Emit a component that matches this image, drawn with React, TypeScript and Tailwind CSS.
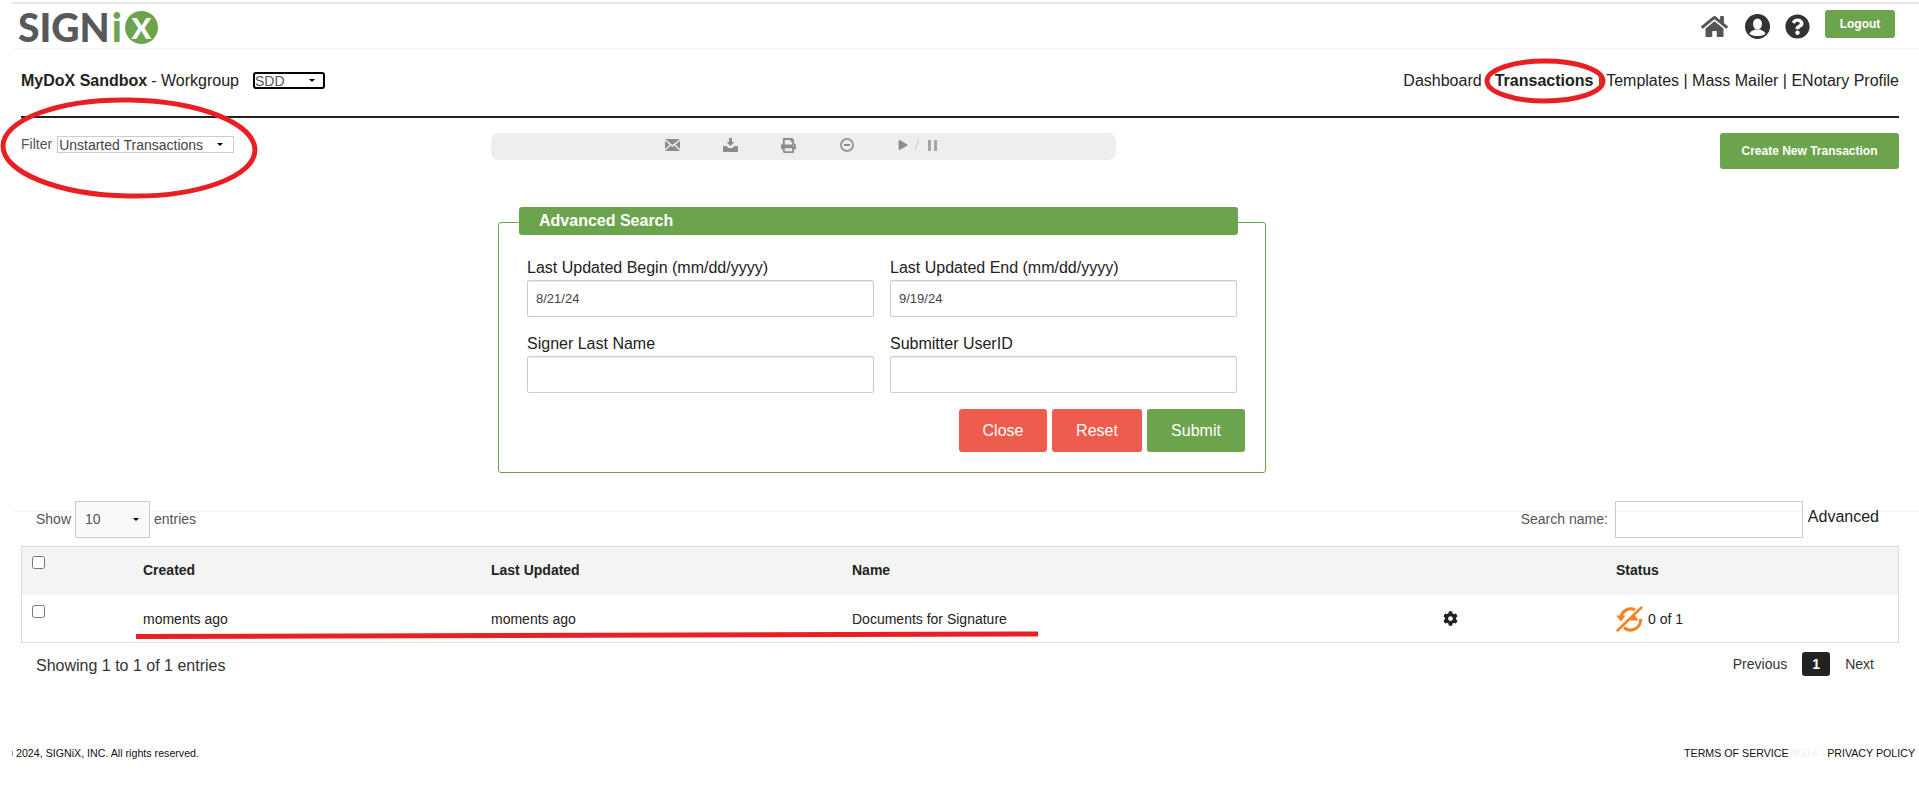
import { FaCog, FaHome, FaPlay, FaPrint, FaQuestionCircle } from "react-icons/fa";

function Caret() {
  return <span className="ml-auto h-0 w-0 border-x-[3px] border-t-[3px] border-x-transparent border-t-black" />;
}

function Field({ label, value }: { label: string; value?: string }) {
  return (
    <div>
      <label className="block h-[21px] text-[16px] leading-[17px] text-[#222]">{label}</label>
      <input
        defaultValue={value}
        className="block h-[37px] w-full rounded-[2px] border border-[#ccc] px-[8px] pb-[1px] text-[13px] text-[#444] shadow-[inset_0_1px_1px_rgba(0,0,0,0.075)]"
      />
    </div>
  );
}

function MailIcon() {
  return (
    <svg width="15" height="12" viewBox="0 0 15 12">
      <path d="M0 0h15L7.5 6zM0 1.8l4.6 3.9L0 10zM15 1.8l-4.6 3.9L15 10zM5.6 6.6l1.9 1.5 1.9-1.5L15 12H0z" fill="#8c8c8c" />
    </svg>
  );
}

function SaveIcon() {
  return (
    <svg width="15" height="14" viewBox="0 0 15 14">
      <path d="M6 0h3v4h2.5l-4 4-4-4H6zM0 8h3.5l2 2h4l2-2H15v6H0z" fill="#8c8c8c" />
    </svg>
  );
}

function StatusIcon() {
  return (
    <svg width="27" height="26" viewBox="0 0 27 26" fill="none" stroke="#f58220">
      <path d="M5 11.500A10 10 0 0 1 19 3.800M24.500 13A10 10 0 0 1 8 21.500" strokeWidth="3" />
      <path d="M1.500 24.500 25.500 1.500" strokeWidth="2.500" strokeLinecap="round" />
      <path d="M0 9.500h9.500L5 15.500zM14 14.500h8.500L18 8z" fill="#f58220" stroke="none" />
    </svg>
  );
}

function UserIcon() {
  return (
    <svg width="25" height="25" viewBox="0 0 25 25">
      <circle cx="12.5" cy="12.5" r="12.5" fill="#333" />
      <ellipse cx="12.5" cy="10" rx="4.5" ry="5.5" fill="#fff" />
      <path d="M4.5 20c.5-3 4-3.5 5.5-4.5h5c1.500 1 5 1.500 5.500 4.500-2 1.500-4.500 2-8 2s-6-.5-8-2z" fill="#fff" />
    </svg>
  );
}

export default function App() {
  return (
    <div className="relative h-[799px] overflow-hidden bg-white pt-[2px] font-['Liberation_Sans',sans-serif] text-[#333]">
      {/* Top bar */}
      <header className="ml-[12px] flex h-[47px] items-start border-t-2 border-b border-t-[#e5e5e5] border-b-[#f6f6f6] pl-[6px] pr-[24px]">
        <div className="mt-[7px] flex h-[33px] items-center font-['Lato',sans-serif] text-[39px] font-black leading-none text-[#58595b]">
          SIGN<span className="ml-[2px] text-[#6ca44d]">i</span>
          <span className="ml-[3px] flex h-[33px] w-[33px] items-center justify-center rounded-full bg-[#6ca44d] text-[29px] text-white">X</span>
        </div>
        <div className="ml-auto flex items-start">
          <FaHome className="mt-[9px] text-[#555]" size={27} />
          <span className="ml-[17px] mt-[10px]"><UserIcon /></span>
          <FaQuestionCircle className="ml-[15px] mt-[10px] text-[#333]" size={25} />
          <button className="ml-[15px] mt-[6px] h-[28px] w-[70px] rounded-[3px] bg-[#6ca44d] text-[12px] font-bold text-white">Logout</button>
        </div>
      </header>

      {/* Workgroup and nav */}
      <div className="flex h-[67px] items-start pl-[21px] pr-[20px] pt-[23px] text-[16px] leading-[18px] text-[#222]">
        <b>MyDoX Sandbox</b>
        <span className="ml-[4px]">- Workgroup</span>
        <div className="ml-[14px] flex h-[17px] w-[72px] items-center rounded-[3px] border-2 border-black pr-[8px] text-[14px] leading-none text-[#555]">
          SDD<Caret />
        </div>
        <nav className="ml-auto">
          Dashboard | <b>Transactions</b> | Templates | Mass Mailer | ENotary Profile
        </nav>
      </div>
      <div className="ml-[21px] mr-[20px] h-[2px] bg-[#222]" />

      {/* Filter, toolbar, create */}
      <div className="flex items-start pl-[21px] pr-[20px] pt-[15px]">
        <div className="flex w-[470px] items-center pt-[3px] text-[14px] leading-[17px] text-[#555]">
          Filter
          <div className="ml-[5px] flex h-[17px] w-[177px] items-center border border-[#ccc] pl-[1px] pr-[10px] text-[14px] leading-none text-[#444]">
            Unstarted Transactions<Caret />
          </div>
        </div>
        <div className="flex h-[27px] w-[625px] items-center rounded-[8px] bg-[#eee] pb-[3px] pl-[174px] text-[#8c8c8c]">
          <MailIcon />
          <span className="ml-[43px]"><SaveIcon /></span>
          <FaPrint className="ml-[43px]" size={15} />
          <span className="ml-[44px] flex h-[14px] w-[14px] items-center justify-center rounded-full border-2 border-[#999]">
            <span className="h-[2px] w-[6px] bg-[#8c8c8c]" />
          </span>
          <FaPlay className="ml-[44px]" size={10} />
          <span className="ml-[7px] text-[14px] leading-none text-[#c9d99a]">/</span>
          <span className="ml-[9px] flex gap-[3px]">
            <span className="h-[11px] w-[3px] bg-[#a5a5a5]" />
            <span className="h-[11px] w-[3px] bg-[#a5a5a5]" />
          </span>
        </div>
        <button className="ml-auto h-[36px] w-[179px] rounded-[3px] bg-[#6ca44d] text-[12px] font-bold text-white">Create New Transaction</button>
      </div>

      {/* Advanced search */}
      <div className="ml-[498px] mt-[53px] h-[251px] w-[768px] rounded-[3px] border border-[#6ca44d] pl-[28px] pr-[20px]">
        <div className="-ml-[8px] -mt-[16px] flex h-[28px] w-[719px] items-center rounded-[3px] bg-[#6ca44d] pl-[20px] text-[16px] font-bold text-white">
          Advanced Search
        </div>
        <div className="mt-[24px] grid w-[710px] grid-cols-2 gap-x-[16px] gap-y-[18px]">
          <Field label="Last Updated Begin (mm/dd/yyyy)" value="8/21/24" />
          <Field label="Last Updated End (mm/dd/yyyy)" value="9/19/24" />
          <Field label="Signer Last Name" />
          <Field label="Submitter UserID" />
        </div>
        <div className="mt-[16px] flex justify-end gap-[5px] pb-[1px] text-[16px] text-white">
          <button className="h-[43px] w-[88px] rounded-[3px] bg-[#ed5c4d]">Close</button>
          <button className="h-[43px] w-[90px] rounded-[3px] bg-[#ed5c4d]">Reset</button>
          <button className="h-[43px] w-[98px] rounded-[3px] bg-[#6ca44d]">Submit</button>
        </div>
      </div>

      {/* Table controls */}
      <div className="ml-[12px] h-[39px] border-b border-[#f6f6f6]" />
      <div className="-mt-[11px] flex h-[37px] items-center pl-[36px] pr-[40px] text-[14px] text-[#555]">
        Show
        <div className="ml-[4px] flex h-[37px] w-[75px] items-center border border-[#ccc] bg-[#fafafa] pl-[9px] pr-[10px]">
          10<Caret />
        </div>
        <span className="ml-[4px]">entries</span>
        <span className="ml-auto">Search name:</span>
        <input className="ml-[7px] h-[37px] w-[188px] border border-[#ccc]" />
        <span className="mb-[6px] ml-[5px] text-[16px] text-[#222]">Advanced</span>
      </div>

      {/* Table */}
      <div className="ml-[21px] mr-[20px] mt-[8px] border border-[#ddd] text-[14px] text-[#222]">
        <div className="grid h-[48px] grid-cols-[121px_348px_361px_591px_173px_1fr] bg-[#f4f4f4] font-bold">
          <div className="pl-[10px] pt-[9px]"><input type="checkbox" className="m-0 block h-[13px] w-[13px]" /></div>
          <div className="pt-[13px]">Created</div>
          <div className="pt-[13px]">Last Updated</div>
          <div className="pt-[13px]">Name</div>
          <div />
          <div className="pt-[13px]">Status</div>
        </div>
        <div className="grid h-[47px] grid-cols-[121px_348px_361px_591px_173px_1fr]">
          <div className="pl-[10px] pt-[10px]"><input type="checkbox" className="m-0 block h-[13px] w-[13px]" /></div>
          <div className="pt-[14px]">moments ago</div>
          <div className="pt-[14px]">moments ago</div>
          <div className="pt-[14px]">Documents for Signature</div>
          <div className="pt-[16px]"><FaCog size={15} /></div>
          <div className="flex items-start pt-[11px]">
            <StatusIcon />
            <span className="ml-[5px] mt-[3px]">0 of 1</span>
          </div>
        </div>
      </div>

      {/* Pagination */}
      <div className="ml-[36px] mr-[45px] mt-[9px] flex h-[24px] items-center text-[14px] text-[#333]">
        <span className="mt-[3px] text-[16px]">Showing 1 to 1 of 1 entries</span>
        <span className="ml-auto">Previous</span>
        <span className="ml-[15px] flex h-[24px] w-[28px] items-center justify-center rounded-[3px] bg-[#222] font-bold text-white">1</span>
        <span className="ml-[15px]">Next</span>
      </div>

      {/* Footer */}
      <footer className="ml-[12px] mr-[4px] mt-[71px] flex items-center text-[10.67px] leading-[13px] text-[#111]">
        <span className="mr-[3px] h-[5px] w-px bg-[#8f8fb0]" />
        2024, SIGNiX, INC. All rights reserved.
        <span className="ml-auto">TERMS OF SERVICE</span>
        <span className="text-[#eee]">WS14 -&nbsp;</span>
        <span>PRIVACY POLICY</span>
      </footer>

      {/* Red pen marks on the screenshot */}
      <svg className="pointer-events-none absolute left-0 top-0" width="1919" height="799" fill="none" stroke="#e81f23">
        <ellipse cx="129" cy="148" rx="126" ry="48" strokeWidth="5" transform="rotate(1 129 148)" />
        <ellipse cx="1545" cy="81" rx="58" ry="20" strokeWidth="5" />
        <path d="M136 636.500 1038 634" strokeWidth="5" />
      </svg>
    </div>
  );
}
